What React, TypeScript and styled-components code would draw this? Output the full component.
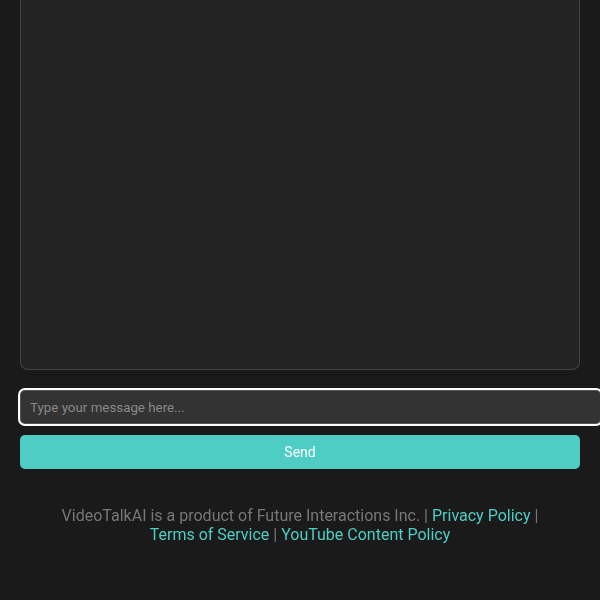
import React, { useEffect, useRef } from "react";
import styled, { createGlobalStyle } from "styled-components";

const Global = createGlobalStyle`
  html, body { margin: 0; padding: 0; background: #1a1a1a; overflow: hidden; }
  body { font-family: Roboto, "Noto Sans", Arial, sans-serif; color: #fff; }
`;

const Page = styled.div`
  padding: 0 20px;
  min-height: 600px;
`;

const ChatBox = styled.div`
  height: 369px;
  background: #222222;
  border: 1px solid #444444;
  border-top: none;
  border-radius: 0 0 8px 8px;
`;

const Input = styled.input`
  display: block;
  box-sizing: content-box;
  width: 100%;
  margin: 20px 0 0;
  padding: 8px 10px 8px 9px;
  height: 16px;
  background: #333333;
  border: 1px solid #555555;
  border-radius: 5px;
  color: #fff;
  font-family: Roboto, Arial, sans-serif;
  font-size: 13.333px;
  outline: 2px solid #ffffff;
  outline-offset: 0;
  &::placeholder { color: #888888; }
`;

const SendButton = styled.button`
  display: block;
  box-sizing: border-box;
  width: 100%;
  height: 34px;
  margin-top: 11px;
  border: none;
  border-radius: 5px;
  background: #4ecdc4;
  color: #ffffff;
  font-family: Roboto, Arial, sans-serif;
  font-size: 14px;
`;

const Footer = styled.footer`
  margin-top: 37px;
  text-align: center;
  color: #777777;
  font-size: 16px;
  line-height: 19px;
  padding: 0 20px;
`;

const Link = styled.a`
  color: #4ecdc4;
  text-decoration: none;
`;

export default function App() {
  const ref = useRef<HTMLInputElement>(null);
  useEffect(() => {
    ref.current?.focus({ preventScroll: true });
    window.scrollTo(0, 0);
  }, []);
  return (
    <>
      <Global />
      <Page>
        <ChatBox />
        <Input ref={ref} placeholder="Type your message here..." />
        <SendButton>Send</SendButton>
        <Footer>
          VideoTalkAI is a product of Future Interactions Inc. | <Link href="#">Privacy Policy</Link> |{" "}
          <Link href="#">Terms of Service</Link> | <Link href="#">YouTube Content Policy</Link>
        </Footer>
      </Page>
    </>
  );
}
